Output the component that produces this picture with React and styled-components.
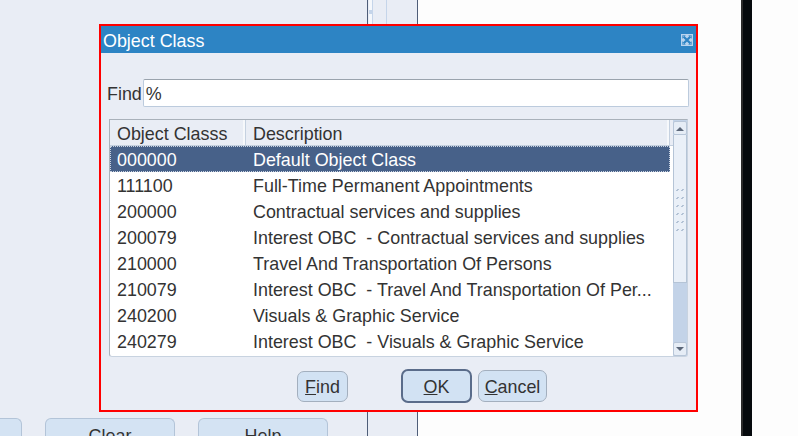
import React from "react";
import styled, { createGlobalStyle } from "styled-components";

const GlobalStyle = createGlobalStyle`
  html, body { margin: 0; padding: 0; }
  body {
    width: 798px;
    height: 436px;
    overflow: hidden;
    font-family: "Liberation Sans", Arial, sans-serif;
  }
`;

const FONT = "17.9px";

const Page = styled.div`
  position: relative;
  display: flex;
  width: 798px;
  height: 436px;
  overflow: hidden;
  background: #fdfdfd;
`;

const LeftPanel = styled.div`
  width: 367px;
  flex: none;
  background: #e9edf5;
  display: flex;
  flex-direction: column;
  padding-top: 378px;
  box-sizing: border-box;
`;

const Rule = styled.div`
  height: 1px;
  background: #c5d5ea;
  margin-bottom: ${(p) => p.$gap}px;
`;

const BgButtonRow = styled.div`
  display: flex;
  gap: 23px;
  margin-left: -108px;
`;

const BgButton = styled.div`
  width: 130px;
  height: 30px;
  flex: none;
  box-sizing: border-box;
  background: #d4e3f3;
  border: 1px solid #b3c4d8;
  border-bottom: none;
  border-radius: 6px 6px 0 0;
  display: flex;
  justify-content: center;
  padding-top: 7px;
  font-size: ${FONT};
  color: #333;
`;

const DarkLine = styled.div`
  width: 1px;
  flex: none;
  background: #4e5d78;
`;

const MiddleColumn = styled.div`
  width: 49px;
  flex: none;
  background: #e9edf5;
  display: flex;
  align-items: flex-start;
`;

const ScrollStrip = styled.div`
  width: 3px;
  height: 300px;
  margin-left: 1px;
  background: #f5f8fc;
  border-right: 1px solid #c5d5ea;
  position: relative;
  &::after {
    content: "";
    position: absolute;
    left: 0;
    top: 10px;
    width: 3px;
    height: 4px;
    background: #c5d5ea;
  }
`;

const ThinLine = styled.div`
  width: 1px;
  height: 300px;
  margin-left: 13px;
  background: #c5d5ea;
`;

const WhiteArea = styled.div`
  width: ${(p) => (p.$w ? `${p.$w}px` : "auto")};
  flex: ${(p) => (p.$w ? "none" : "1")};
  background: #fdfdfd;
`;

const BlackBar = styled.div`
  width: 11px;
  flex: none;
  box-sizing: border-box;
  background: #060a0d;
  border-left: 2px solid #2b2b2b;
`;

/* ---------- Dialog ---------- */

const Dialog = styled.div`
  position: absolute;
  left: 99px;
  top: 24px;
  width: 599px;
  height: 388px;
  box-sizing: border-box;
  border: 2px solid #ff0000;
  background: #e9edf5;
  display: flex;
  flex-direction: column;
  font-size: ${FONT};
  color: #333;
`;

const TitleBar = styled.div`
  height: 27px;
  flex: none;
  box-sizing: border-box;
  background: #2d84c4;
  display: flex;
  align-items: center;
  justify-content: space-between;
  padding: 3px 3px 0 2px;
  color: #fff;
`;

const CloseBox = styled.div`
  width: 12px;
  height: 12px;
  margin-top: -3px;
  background: #b8d4ef;
  display: flex;
  align-items: center;
  justify-content: center;
`;

const FindRow = styled.div`
  display: flex;
  align-items: center;
  padding: 26px 7px 0 6px;
`;

const Label = styled.span`
  margin-right: 1px;
  padding-top: 2px;
`;

const TextField = styled.div`
  flex: 1;
  height: 28px;
  box-sizing: border-box;
  background: #fff;
  border: 1px solid #bccbdd;
  border-top-color: #9aa3ad;
  border-radius: 2px;
  display: flex;
  align-items: center;
  padding: 2px 0 0 2px;
`;

const Table = styled.div`
  margin: 12px 8px 0 8px;
  height: 238px;
  box-sizing: border-box;
  border: 1px solid #c8d3e0;
  border-top-color: #a9b1ba;
  border-left-color: #a9b1ba;
  border-radius: 0 0 3px 3px;
  background: #fff;
  display: flex;
`;

const ListArea = styled.div`
  flex: 1;
  display: flex;
  flex-direction: column;
`;

const HeaderRow = styled.div`
  height: 26px;
  box-sizing: border-box;
  display: grid;
  grid-template-columns: 136px 1fr 3px;
  background: #e9edf5;
  border-bottom: 1px solid #c3cfde;
`;

const HeaderCell = styled.div`
  display: flex;
  align-items: center;
  padding: 4px 0 0 7px;
  border-right: ${(p) => (p.$last ? "none" : "1px solid #c5d1e0")};
  box-shadow: ${(p) => (p.$last ? "none" : "inset -2px 0 0 #f6f8fb")};
  white-space: nowrap;
`;

const Row = styled.div`
  height: 26px;
  box-sizing: border-box;
  width: 560px;
  display: grid;
  grid-template-columns: 136px 1fr;
  background: ${(p) => (p.$selected ? "#476189" : "#fff")};
  color: ${(p) => (p.$selected ? "#fff" : "#333")};
  outline: ${(p) => (p.$selected ? "1px dotted #c9d2e0" : "none")};
  outline-offset: -1px;
`;

const Cell = styled.div`
  display: flex;
  align-items: center;
  padding: 3px 0 0 7px;
  white-space: pre;
  overflow: hidden;
`;

const ScrollBar = styled.div`
  width: 14px;
  flex: none;
  display: flex;
  flex-direction: column;
  background: #c3d3e8;
  padding-top: 1px;
  box-sizing: border-box;
`;

const ArrowBtn = styled.div`
  height: 14px;
  flex: none;
  box-sizing: border-box;
  background: #e6edf6;
  border: 1px solid #b8c6d8;
  border-radius: 2px;
  display: flex;
  align-items: center;
  justify-content: center;
`;

const Thumb = styled.div`
  height: 148px;
  flex: none;
  box-sizing: border-box;
  background: #eaf0f8;
  border: 1px solid #b5c4d6;
  border-top: none;
  display: flex;
  align-items: center;
  justify-content: center;
`;

const Track = styled.div`
  flex: 1;
`;

const ButtonRow = styled.div`
  display: flex;
  align-items: center;
  margin-top: 12px;
  padding-left: 196px;
`;

const Button = styled.div`
  width: ${(p) => p.$w}px;
  height: ${(p) => p.$h}px;
  margin-left: ${(p) => p.$ml || 0}px;
  box-sizing: border-box;
  background: #d2e2f3;
  border: ${(p) => (p.$default ? "2px solid #5a6c8a" : "1px solid #a3afbe")};
  border-radius: 7px;
  display: flex;
  align-items: center;
  justify-content: center;
  padding-top: 2px;
  color: #333;
`;

const rows = [
  ["000000", "Default Object Class"],
  ["111100", "Full-Time Permanent Appointments"],
  ["200000", "Contractual services and supplies"],
  ["200079", "Interest OBC  - Contractual services and supplies"],
  ["210000", "Travel And Transportation Of Persons"],
  ["210079", "Interest OBC  - Travel And Transportation Of Per..."],
  ["240200", "Visuals & Graphic Service"],
  ["240279", "Interest OBC  - Visuals & Graphic Service"],
];

const Grip = () => (
  <svg width="8" height="44" viewBox="0 0 8 44">
    {[0, 1, 2, 3, 4, 5].map((i) => (
      <g key={i}>
        <line x1="0.5" y1={i * 8 + 4} x2="2.5" y2={i * 8 + 2} stroke="#7d95b3" strokeWidth="1" />
        <line x1="5.5" y1={i * 8 + 4} x2="7.5" y2={i * 8 + 2} stroke="#7d95b3" strokeWidth="1" />
      </g>
    ))}
  </svg>
);

export default function App() {
  return (
    <>
      <GlobalStyle />
      <Page>
        <LeftPanel>
          <Rule $gap={13} />
          <Rule $gap={27} />
          <BgButtonRow>
            <BgButton>Save</BgButton>
            <BgButton>Clear</BgButton>
            <BgButton>Help</BgButton>
          </BgButtonRow>
        </LeftPanel>
        <DarkLine />
        <MiddleColumn>
          <ScrollStrip />
          <ThinLine />
        </MiddleColumn>
        <DarkLine />
        <WhiteArea $w={323} />
        <BlackBar />
        <WhiteArea />

        <Dialog>
          <TitleBar>
            <span>Object Class</span>
            <CloseBox>
              <svg width="10" height="10" viewBox="0 0 10 10">
                <path d="M1.5 1.5 L8.5 8.5 M8.5 1.5 L1.5 8.5" stroke="#2d84c4" strokeWidth="2.2" />
                <path d="M0.5 0.5 h3 M0.5 0.5 v3 M9.5 0.5 h-3 M9.5 0.5 v3 M0.5 9.5 h3 M0.5 9.5 v-3 M9.5 9.5 h-3 M9.5 9.5 v-3" stroke="#2d84c4" strokeWidth="1" opacity="0.6" />
              </svg>
            </CloseBox>
          </TitleBar>

          <FindRow>
            <Label>Find</Label>
            <TextField>%</TextField>
          </FindRow>

          <Table>
            <ListArea>
              <HeaderRow>
                <HeaderCell>Object Classs</HeaderCell>
                <HeaderCell>Description</HeaderCell>
                <HeaderCell $last />
              </HeaderRow>
              {rows.map(([code, desc], i) => (
                <Row key={code} $selected={i === 0}>
                  <Cell>{code}</Cell>
                  <Cell>{desc}</Cell>
                </Row>
              ))}
            </ListArea>
            <ScrollBar>
              <ArrowBtn>
                <svg width="8" height="5" viewBox="0 0 8 5">
                  <path d="M0 5 L4 1 L8 5 Z" fill="#5b6779" />
                </svg>
              </ArrowBtn>
              <Thumb>
                <Grip />
              </Thumb>
              <Track />
              <ArrowBtn>
                <svg width="8" height="5" viewBox="0 0 8 5">
                  <path d="M0 0 L8 0 L4 4 Z" fill="#5b6779" />
                </svg>
              </ArrowBtn>
            </ScrollBar>
          </Table>

          <ButtonRow>
            <Button $w={51} $h={31}>
              <u>F</u>ind
            </Button>
            <Button $w={71} $h={34} $ml={53} $default>
              <u>O</u>K
            </Button>
            <Button $w={69} $h={32} $ml={6}>
              <u>C</u>ancel
            </Button>
          </ButtonRow>
        </Dialog>
      </Page>
    </>
  );
}
